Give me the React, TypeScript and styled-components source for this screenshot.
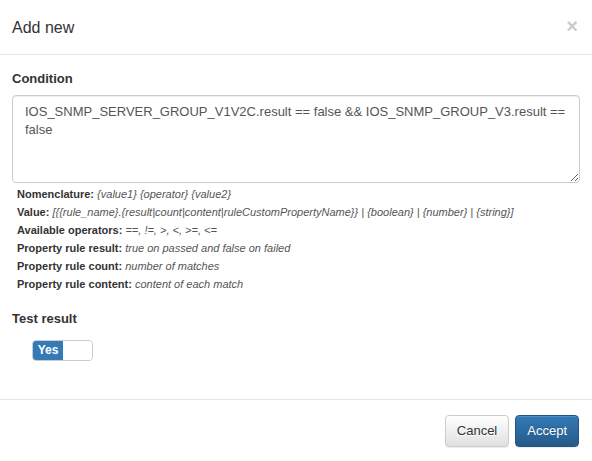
import React from "react";
import styled, { createGlobalStyle } from "styled-components";

const Global = createGlobalStyle`
  html, body { margin: 0; padding: 0; background: #fff; }
  body { font-family: "Liberation Sans", Arial, sans-serif; color: #333; font-size: 13px; }
`;

const Modal = styled.div`
  width: 592px;
  height: 461px;
  display: flex;
  flex-direction: column;
  background: #fff;
`;

const Header = styled.div`
  display: flex;
  align-items: center;
  justify-content: space-between;
  padding: 15px 14px 14px 12px;
  border-bottom: 1px solid #e5e5e5;
`;

const Title = styled.h4`
  margin: 0;
  font-size: 16px;
  font-weight: normal;
  line-height: 25px;
  color: #333;
`;

const Close = styled.button`
  border: 0;
  background: none;
  padding: 0;
  font-family: "Liberation Sans", Arial, sans-serif;
  font-size: 20px;
  font-weight: bold;
  line-height: 1;
  color: #000;
  opacity: 0.2;
  text-shadow: 0 1px 0 #fff;
  cursor: pointer;
  margin-top: -4px;
`;

const Body = styled.div`
  flex: 1;
  padding: 14px 12px 0 12px;
  display: flex;
  flex-direction: column;
`;

const FormGroup = styled.div<{ $gap?: number }>`
  margin-bottom: ${(p) => p.$gap ?? 0}px;
  display: flex;
  flex-direction: column;
`;

const Label = styled.label`
  font-weight: bold;
  font-size: 13px;
  line-height: 20px;
  margin-bottom: 6px;
  color: #333;
`;

const TextArea = styled.textarea`
  box-sizing: border-box;
  width: 568px;
  height: 88px;
  padding: 7px 12px;
  font-family: "Liberation Sans", Arial, sans-serif;
  font-size: 13px;
  line-height: 18px;
  color: #555;
  border: 1px solid #ccc;
  border-radius: 4px;
  box-shadow: inset 0 1px 1px rgba(0, 0, 0, 0.075);
  resize: vertical;
  outline: none;
`;

const Help = styled.div`
  margin-top: 2px;
  padding-left: 5px;
  font-size: 11px;
  line-height: 18px;
  color: #333;
`;

const HelpLine = styled.div`
  b { font-weight: bold; color: #333; }
  i { color: #555; }
`;

const SwitchWrap = styled.div`
  margin-left: 20px;
  margin-top: 5px;
  display: flex;
  width: 61px;
  height: 21px;
  box-sizing: border-box;
  border: 1px solid #ccc;
  border-radius: 4px;
  overflow: hidden;
`;

const SwitchOn = styled.span`
  width: 30px;
  background: #337ab7;
  color: #fff;
  font-weight: bold;
  font-size: 12px;
  line-height: 19px;
  text-align: center;
`;

const SwitchHandle = styled.span`
  flex: 1;
  background: #fff;
`;

const Footer = styled.div`
  display: flex;
  justify-content: flex-end;
  gap: 6px;
  padding: 15px 13px 14px 15px;
  border-top: 1px solid #e5e5e5;
`;

const Button = styled.button<{ $primary?: boolean }>`
  height: 32px;
  padding: 6px 11px;
  font-family: "Liberation Sans", Arial, sans-serif;
  font-size: 13px;
  line-height: 18px;
  border-radius: 4px;
  cursor: pointer;
  color: ${(p) => (p.$primary ? "#fff" : "#333")};
  border: 1px solid ${(p) => (p.$primary ? "#245580" : "#ccc")};
  background: ${(p) =>
    p.$primary
      ? "linear-gradient(to bottom, #337ab7 0, #265a88 100%)"
      : "linear-gradient(to bottom, #fff 0, #e0e0e0 100%)"};
  text-shadow: ${(p) => (p.$primary ? "0 -1px 0 rgba(0,0,0,.2)" : "0 1px 0 #fff")};
  box-shadow: inset 0 1px 0 rgba(255, 255, 255, 0.15), 0 1px 1px rgba(0, 0, 0, 0.075);
`;

const help: [string, string][] = [
  ["Nomenclature:", "{value1} {operator} {value2}"],
  ["Value:", "[{{rule_name}.{result|count|content|ruleCustomPropertyName}} | {boolean} | {number} | {string}]"],
  ["Available operators:", "==, !=, >, <, >=, <="],
  ["Property rule result:", "true on passed and false on failed"],
  ["Property rule count:", "number of matches"],
  ["Property rule content:", "content of each match"],
];

export default function App() {
  return (
    <Modal>
      <Global />
      <Header>
        <Title>Add new</Title>
        <Close aria-label="Close">×</Close>
      </Header>
      <Body>
        <FormGroup $gap={16}>
          <Label>Condition</Label>
          <TextArea
            defaultValue="IOS_SNMP_SERVER_GROUP_V1V2C.result == false && IOS_SNMP_GROUP_V3.result == false"
          />
          <Help>
            {help.map(([k, v]) => (
              <HelpLine key={k}>
                <b>{k}</b> <i>{v}</i>
              </HelpLine>
            ))}
          </Help>
        </FormGroup>
        <FormGroup>
          <Label>Test result</Label>
          <SwitchWrap>
            <SwitchOn>Yes</SwitchOn>
            <SwitchHandle />
          </SwitchWrap>
        </FormGroup>
      </Body>
      <Footer>
        <Button>Cancel</Button>
        <Button $primary>Accept</Button>
      </Footer>
    </Modal>
  );
}
